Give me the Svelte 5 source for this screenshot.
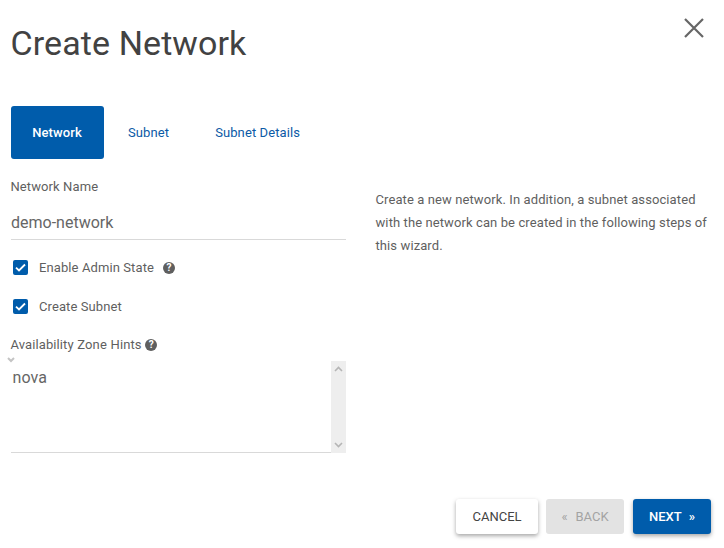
<script>
	let networkName = 'demo-network';
	let hints = 'nova';
	let adminState = true;
	let createSubnet = true;
	const tabs = ['Network', 'Subnet', 'Subnet Details'];
</script>

<div class="modal">
	<header class="head">
		<h1>Create Network</h1>
		<button class="close" aria-label="Close">
			<svg width="20" height="20" viewBox="0 0 20 20"><path d="M1 1 19 19M19 1 1 19" /></svg>
		</button>
	</header>

	<nav class="tabs">
		{#each tabs as tab, i}
			<a href="#{tab}" class:active={i === 0}>{tab}</a>
		{/each}
	</nav>

	<div class="body">
		<form class="fields">
			<label class="name-label" for="name">Network Name</label>
			<input id="name" class="name" bind:value={networkName} />

			<label class="check first">
				<input type="checkbox" bind:checked={adminState} />
				<span class="box"><svg width="15" height="15" viewBox="0 0 15 15"><path d="M3 7.6 6 10.5 12 4.5" /></svg></span>
				Enable Admin State
				<span class="help wide">?</span>
			</label>
			<label class="check second">
				<input type="checkbox" bind:checked={createSubnet} />
				<span class="box"><svg width="15" height="15" viewBox="0 0 15 15"><path d="M3 7.6 6 10.5 12 4.5" /></svg></span>
				Create Subnet
			</label>

			<div class="zone-label">Availability Zone Hints <span class="help">?</span></div>
			<div class="zone">
				<svg class="resize" width="8" height="6" viewBox="0 0 8 6"><path d="M1 1 4 4 7 1" /></svg>
				<div class="zone-text">{hints}</div>
				<div class="scroll">
					<svg width="15" height="10" viewBox="0 0 15 10"><path d="M4 7 7.5 3.5 11 7" /></svg>
					<svg width="15" height="10" viewBox="0 0 15 10"><path d="M4 3 7.5 6.5 11 3" /></svg>
				</div>
			</div>
		</form>

		<p class="desc">Create a new network. In addition, a subnet associated with the network can be created in the following steps of this wizard.</p>
	</div>

	<footer class="actions">
		<button class="btn cancel">CANCEL</button>
		<button class="btn back" disabled><span class="arrow">«</span>BACK</button>
		<button class="btn next">NEXT<span class="arrow">»</span></button>
	</footer>
</div>

<style>
	:global(body) {
		margin: 0;
		background: #fff;
	}
	.modal {
		width: 724px;
		height: 548px;
		box-sizing: border-box;
		padding: 0 13px 0 11px;
		font-family: Roboto, "Liberation Sans", sans-serif;
		color: #5f5f5f;
		letter-spacing: 0.1px;
		overflow: hidden;
	}
	.head {
		display: flex;
		justify-content: space-between;
		height: 106px;
	}
	h1 {
		margin: 22px 0 0 -0.5px;
		font-size: 34px;
		line-height: 42px;
		font-weight: 400;
		letter-spacing: 0.1px;
		color: #424242;
	}
	.close {
		width: 20px;
		height: 20px;
		margin: 18px 7.5px 0 0;
		padding: 0;
		border: 0;
		background: none;
	}
	.close svg {
		display: block;
	}
	.close path {
		fill: none;
		stroke: #666;
		stroke-width: 2.2;
	}
	.tabs {
		display: flex;
		height: 53px;
	}
	.tabs a {
		display: flex;
		align-items: center;
		padding: 0 24px 0 24px;
		font-size: 13px;
		color: #0b5aa6;
		text-decoration: none;
		border-radius: 3px;
	}
	.tabs a.active {
		width: 93px;
		box-sizing: border-box;
		justify-content: center;
		padding: 0 1px 0 0;
		background: #005cab;
		color: #fff;
		font-weight: 500;
	}
	.tabs a:nth-child(3) {
		padding-left: 22px;
	}
	.body {
		display: flex;
		gap: 30px;
	}
	.fields {
		width: 335px;
		flex: none;
		font-size: 13px;
	}
	.name-label {
		display: block;
		margin-top: 20px;
		margin-left: -0.5px;
		line-height: 16px;
	}
	.name {
		display: block;
		width: 100%;
		box-sizing: border-box;
		height: 36px;
		margin-top: 9px;
		padding: 2px 0 0;
		border: 0;
		border-bottom: 1px solid #d9d9d9;
		outline: 0;
		font: 16px Roboto, sans-serif;
		letter-spacing: 0;
		color: #666;
	}
	.check {
		display: flex;
		align-items: center;
		height: 15px;
		padding-left: 2px;
		line-height: 15px;
	}
	.check.first {
		margin-top: 20px;
	}
	.check.second {
		margin-top: 24px;
	}
	.check input {
		display: none;
	}
	.box {
		width: 15px;
		height: 15px;
		margin-right: 11px;
		background: #005cab;
		border-radius: 2px;
	}
	.box svg {
		display: block;
	}
	.box path {
		fill: none;
		stroke: #fff;
		stroke-width: 1.8;
	}
	.help {
		display: inline-flex;
		align-items: center;
		justify-content: center;
		width: 12px;
		height: 12px;
		border-radius: 50%;
		background: #5f5f5f;
		color: #fff;
		font-size: 10px;
		font-weight: 700;
		letter-spacing: 0;
		vertical-align: 1px;
	}
	.help.wide {
		margin-left: 9px;
	}
	.zone-label {
		margin-top: 23px;
		margin-left: -0.5px;
		line-height: 16px;
		word-spacing: 0.3px;
	}
	.zone {
		position: relative;
		display: flex;
		justify-content: space-between;
		height: 92px;
		margin-top: 8px;
		box-sizing: border-box;
		border-bottom: 1px solid #d9d9d9;
	}
	.zone-text {
		padding: 8px 0 0 1.5px;
		font-size: 16px;
		line-height: 18px;
		color: #666;
	}
	.resize {
		position: absolute;
		top: -4px;
		left: -4px;
	}
	.resize path {
		fill: none;
		stroke: #c4c4c4;
		stroke-width: 2;
	}
	.scroll {
		display: flex;
		flex-direction: column;
		justify-content: space-between;
		width: 15px;
		height: 92px;
		padding: 3px 0;
		box-sizing: border-box;
		background: #eee;
	}
	.scroll svg {
		display: block;
	}
	.scroll path {
		fill: none;
		stroke: #b5b5b5;
		stroke-width: 1.6;
	}
	.desc {
		width: 335px;
		margin: 28.6px 0 0 -0.5px;
		font-size: 13px;
		line-height: 23px;
		color: #5f5f5f;
	}
	.actions {
		position: absolute;
		top: 499px;
		left: 456px;
		display: flex;
		gap: 8px;
	}
	.btn {
		height: 35px;
		padding: 0;
		border: 0;
		border-radius: 3px;
		font: 13px Roboto, sans-serif;
		box-shadow: 0 2px 4px rgba(0, 0, 0, 0.35);
	}
	.cancel {
		width: 82px;
		background: #fff;
		color: #444;
	}
	.back {
		width: 78px;
		background: #e3e3e3;
		color: #a3a3a3;
		box-shadow: none;
	}
	.back .arrow {
		margin-right: 8px;
	}
	.next {
		width: 78px;
		margin-left: 1px;
		background: #005cab;
		color: #fff;
		font-weight: 500;
	}
	.next .arrow {
		margin-left: 7px;
	}
</style>
